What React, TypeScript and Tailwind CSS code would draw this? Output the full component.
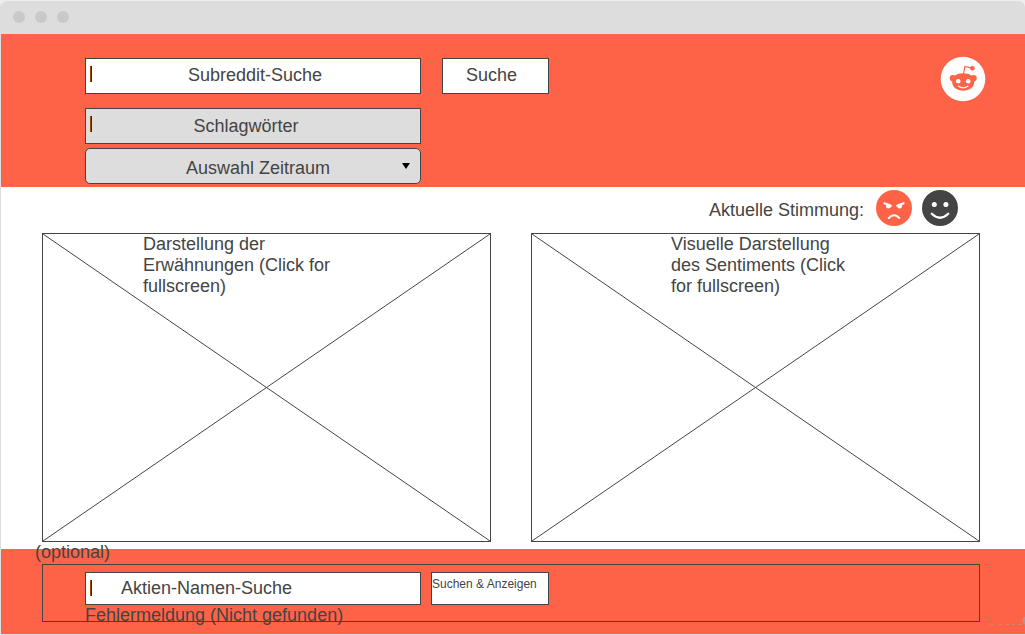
import React from "react";

const TEXT = "text-lg leading-5 text-[#444]";
const BOX = "border border-[#444]";

function Caret() {
  return (
    <span aria-hidden="true" className="absolute top-2 left-[5px] flex h-4">
      <span className="w-px bg-[#a04800]" />
      <span className="w-px bg-[#1c2b3c]" />
    </span>
  );
}

function RedditLogo() {
  return (
    <svg viewBox="0 0 46 46" className="size-[46px]" role="img" aria-label="Reddit">
      <circle cx="23" cy="23" r="22.3" fill="#fff" />
      <g fill="#ff6347">
        <circle cx="12.8" cy="22.2" r="3.1" />
        <circle cx="33.6" cy="22.2" r="3.1" />
        <path d="M23.2 17.2C30 17.2 34.3 20.6 34.3 25.6 34.3 31.6 29.6 34.8 23.2 34.8S12.1 31.6 12.1 25.6C12.1 20.6 16.4 17.2 23.2 17.2Z" />
        <circle cx="32.4" cy="12.2" r="2.3" />
      </g>
      <path d="M23.4 18.5 24.9 10.4 31 11.8" fill="none" stroke="#ff6347" strokeWidth="1.2" />
      <circle cx="18.2" cy="25.2" r="2.3" fill="#fff" />
      <circle cx="28.2" cy="25.2" r="2.3" fill="#fff" />
      <path
        d="M18.6 30.2Q23.2 33.4 27.8 30.2"
        fill="none"
        stroke="#fff"
        strokeWidth="1.3"
        strokeLinecap="round"
      />
    </svg>
  );
}

function AngryFace() {
  return (
    <svg viewBox="0 0 36 36" className="size-9" role="img" aria-label="Negativ">
      <circle cx="18" cy="18" r="18" fill="#ff6347" />
      <path
        d="M8.4 13.2 14.8 15.8M27.6 13.2 21.2 15.8"
        fill="none"
        stroke="#fff"
        strokeWidth="2"
        strokeLinecap="round"
      />
      <circle cx="12.4" cy="16.2" r="2.4" fill="#fff" />
      <circle cx="23.6" cy="16.2" r="2.4" fill="#fff" />
      <path
        d="M12.8 28Q18 22.4 23.2 28"
        fill="none"
        stroke="#fff"
        strokeWidth="2.1"
        strokeLinecap="round"
      />
    </svg>
  );
}

function HappyFace() {
  return (
    <svg viewBox="0 0 36 36" className="size-9" role="img" aria-label="Positiv">
      <circle cx="18" cy="18" r="18" fill="#444" />
      <circle cx="12.3" cy="14.6" r="2.5" fill="#fff" />
      <circle cx="23.9" cy="14.6" r="2.5" fill="#fff" />
      <path
        d="M9.8 23.8Q18 31.8 26.2 23.8"
        fill="none"
        stroke="#fff"
        strokeWidth="2.3"
        strokeLinecap="round"
      />
    </svg>
  );
}

function ChartPlaceholder({ children, inset }: { children: React.ReactNode; inset: string }) {
  return (
    <button
      type="button"
      className={`relative flex min-h-[309px] items-start text-left ${BOX} ${inset}`}
    >
      <svg
        aria-hidden="true"
        className="absolute inset-0 size-full"
        viewBox="0 0 100 100"
        preserveAspectRatio="none"
      >
        <path
          d="M0 0 100 100M100 0 0 100"
          stroke="#444"
          strokeWidth="1"
          vectorEffect="non-scaling-stroke"
        />
      </svg>
      <span className="relative w-48 text-lg leading-[21px] text-[#444]">{children}</span>
    </button>
  );
}

export default function App() {
  return (
    <div className="bg-[#eee] pt-px font-['Liberation_Sans',Arial,sans-serif]">
      <div className="flex min-h-[634px] flex-col rounded-t-md border-b border-l border-[#ddd] bg-white">
        <div className="flex h-[33px] items-center gap-2.5 rounded-t-md bg-[#ddd] pb-0.5 pl-3">
          <span className="size-3 rounded-full bg-[#c9c9c9]" />
          <span className="size-3 rounded-full bg-[#c9c9c9]" />
          <span className="size-3 rounded-full bg-[#c9c9c9]" />
        </div>

        <header className="flex items-start justify-between bg-[#ff6347] pt-6 pr-[39px] pb-[3px] pl-[84px]">
          <form className="flex flex-col" onSubmit={(e) => e.preventDefault()}>
            <div className="flex gap-[21px]">
              <label className="relative block">
                <Caret />
                <input
                  type="text"
                  aria-label="Subreddit-Suche"
                  placeholder="Subreddit-Suche"
                  className={`block h-9 w-84 bg-white pb-0.5 pl-1 text-center placeholder:text-[#444] ${BOX} ${TEXT}`}
                />
              </label>
              <button
                type="submit"
                className={`h-9 w-[107px] bg-white pr-2 pb-0.5 ${BOX} ${TEXT}`}
              >
                Suche
              </button>
            </div>
            <label className="relative mt-3.5 block w-84">
              <Caret />
              <input
                type="text"
                aria-label="Schlagwörter"
                placeholder="Schlagwörter"
                className={`block h-9 w-84 bg-[#ddd] pr-3.5 text-center placeholder:text-[#444] ${BOX} ${TEXT}`}
              />
            </label>
            <label className="relative mt-1 block w-84">
              <select
                aria-label="Auswahl Zeitraum"
                className={`block h-9 w-84 appearance-none rounded-[5px] bg-[#ddd] pt-1 pl-2.5 text-center [text-align-last:center] ${BOX} ${TEXT}`}
              >
                <option>Auswahl Zeitraum</option>
              </select>
              <svg
                aria-hidden="true"
                viewBox="0 0 8 6"
                className="pointer-events-none absolute top-[15px] right-[11px] h-1.5 w-2"
              >
                <path d="M0 0H8L4 6Z" fill="#000" />
              </svg>
            </label>
          </form>
          <a href="#reddit" className="-mt-0.5">
            <RedditLogo />
          </a>
        </header>

        <main className="flex flex-1 flex-col pr-[45px] pb-[7px] pl-[41px]">
          <div className="flex h-[46px] items-center justify-end gap-2.5 pr-[22px] pb-1">
            <span className={`pt-1 pr-0.5 ${TEXT}`}>Aktuelle Stimmung:</span>
            <AngryFace />
            <HappyFace />
          </div>
          <div className="grid flex-1 grid-cols-2 gap-10">
            <ChartPlaceholder inset="pl-[100px]">
              Darstellung der Erwähnungen (Click for fullscreen)
            </ChartPlaceholder>
            <ChartPlaceholder inset="pl-[139px]">
              Visuelle Darstellung
              <br />
              des Sentiments (Click for fullscreen)
            </ChartPlaceholder>
          </div>
        </main>

        <footer className="relative bg-[#ff6347] pt-[15px] pr-[45px] pb-3 pl-[41px]">
          <p className={`absolute -top-[7px] left-[34px] ${TEXT}`}>(optional)</p>
          <form
            className={`flex h-[58px] flex-col pt-[7px] pl-[42px] ${BOX}`}
            onSubmit={(e) => e.preventDefault()}
          >
            <div className="flex gap-2.5">
              <label className="relative block">
                <Caret />
                <input
                  type="text"
                  aria-label="Aktien-Namen-Suche"
                  placeholder="Aktien-Namen-Suche"
                  className={`block h-[33px] w-84 bg-white pl-[35px] placeholder:text-[#444] ${BOX} ${TEXT}`}
                />
              </label>
              <button
                type="submit"
                className={`flex h-[33px] w-[118px] items-start bg-white pt-[3px] text-xs leading-4 whitespace-nowrap text-[#444] ${BOX}`}
              >
                Suchen &amp; Anzeigen
              </button>
            </div>
            <p className={TEXT}>Fehlermeldung (Nicht gefunden)</p>
          </form>
          <svg
            aria-hidden="true"
            viewBox="0 0 35 10"
            className="absolute right-0 bottom-2 h-2.5 w-[35px]"
          >
            <path
              d="M.5 8.5h3M9 8.5h3M17 8.5h2.500M22 8.500h2.500M28 8.500h3"
              stroke="#c98878"
              strokeWidth="1"
            />
            <circle cx="37" cy="4.500" r="4.500" fill="#b8938c" />
          </svg>
        </footer>
      </div>
    </div>
  );
}
